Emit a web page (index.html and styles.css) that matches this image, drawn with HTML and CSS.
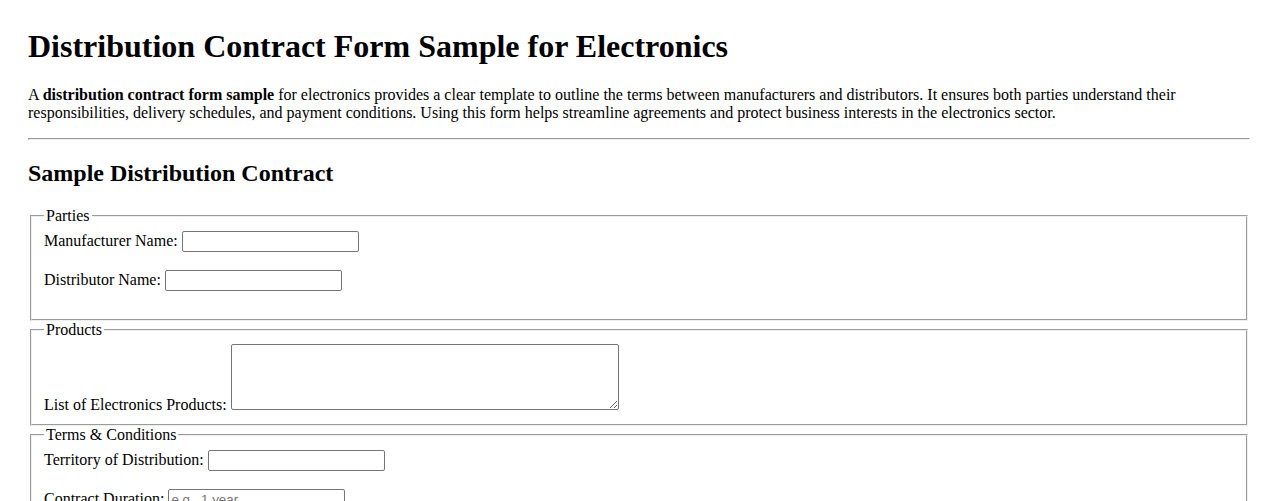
FILE: index.html
```html
<!DOCTYPE html>
<html lang="en">
<head>
<meta charset="utf-8">
<title>Distribution Contract Form Sample for Electronics</title>
<link rel="stylesheet" href="styles.css">
</head>
<body>
<h1 class="title">Distribution Contract Form Sample for Electronics</h1>
<p>A <strong>distribution contract form sample</strong> for electronics provides a clear template to outline the terms between manufacturers and distributors. It ensures both parties understand their responsibilities, delivery schedules, and payment conditions. Using this form helps streamline agreements and protect business interests in the electronics sector.</p>
<hr>
<h2>Sample Distribution Contract</h2>
<form>
  <fieldset>
    <legend>Parties</legend>
    <label>Manufacturer Name: <input type="text" class="field"></label><br><br>
    <label>Distributor Name: <input type="text" class="field"></label><br><br>
  </fieldset>
  <fieldset>
    <legend>Products</legend>
    <label>List of Electronics Products: <textarea class="area"></textarea></label>
  </fieldset>
  <fieldset>
    <legend>Terms &amp; Conditions</legend>
    <label>Territory of Distribution: <input type="text" class="field"></label><br><br>
    <label>Contract Duration: <input type="text" class="field" placeholder="e.g., 1 year"></label><br><br>
    <label>Payment Terms: <input type="text" class="field"></label><br><br>
  </fieldset>
</form>
</body>
</html>
```

FILE: styles.css
```css
html, body {
  background: #ffffff;
}

body {
  margin: 28px;
  font-family: "Liberation Serif", "Times New Roman", serif;
  font-size: 16px;
  color: #000000;
}

.title {
  margin-top: 0;
}

.field {
  box-sizing: border-box;
  width: 177px;
  height: 21px;
  padding: 1px 2px;
  border: 1px solid #767676;
  border-radius: 2px;
  font-family: "Liberation Sans", Arial, sans-serif;
  font-size: 13.33px;
  vertical-align: baseline;
}

.field::placeholder {
  color: #757575;
}

.area {
  box-sizing: border-box;
  width: 388px;
  height: 66px;
  padding: 2px;
  border: 1px solid #767676;
  border-radius: 2px;
  font-family: "Liberation Mono", monospace;
  font-size: 13.33px;
}
```
